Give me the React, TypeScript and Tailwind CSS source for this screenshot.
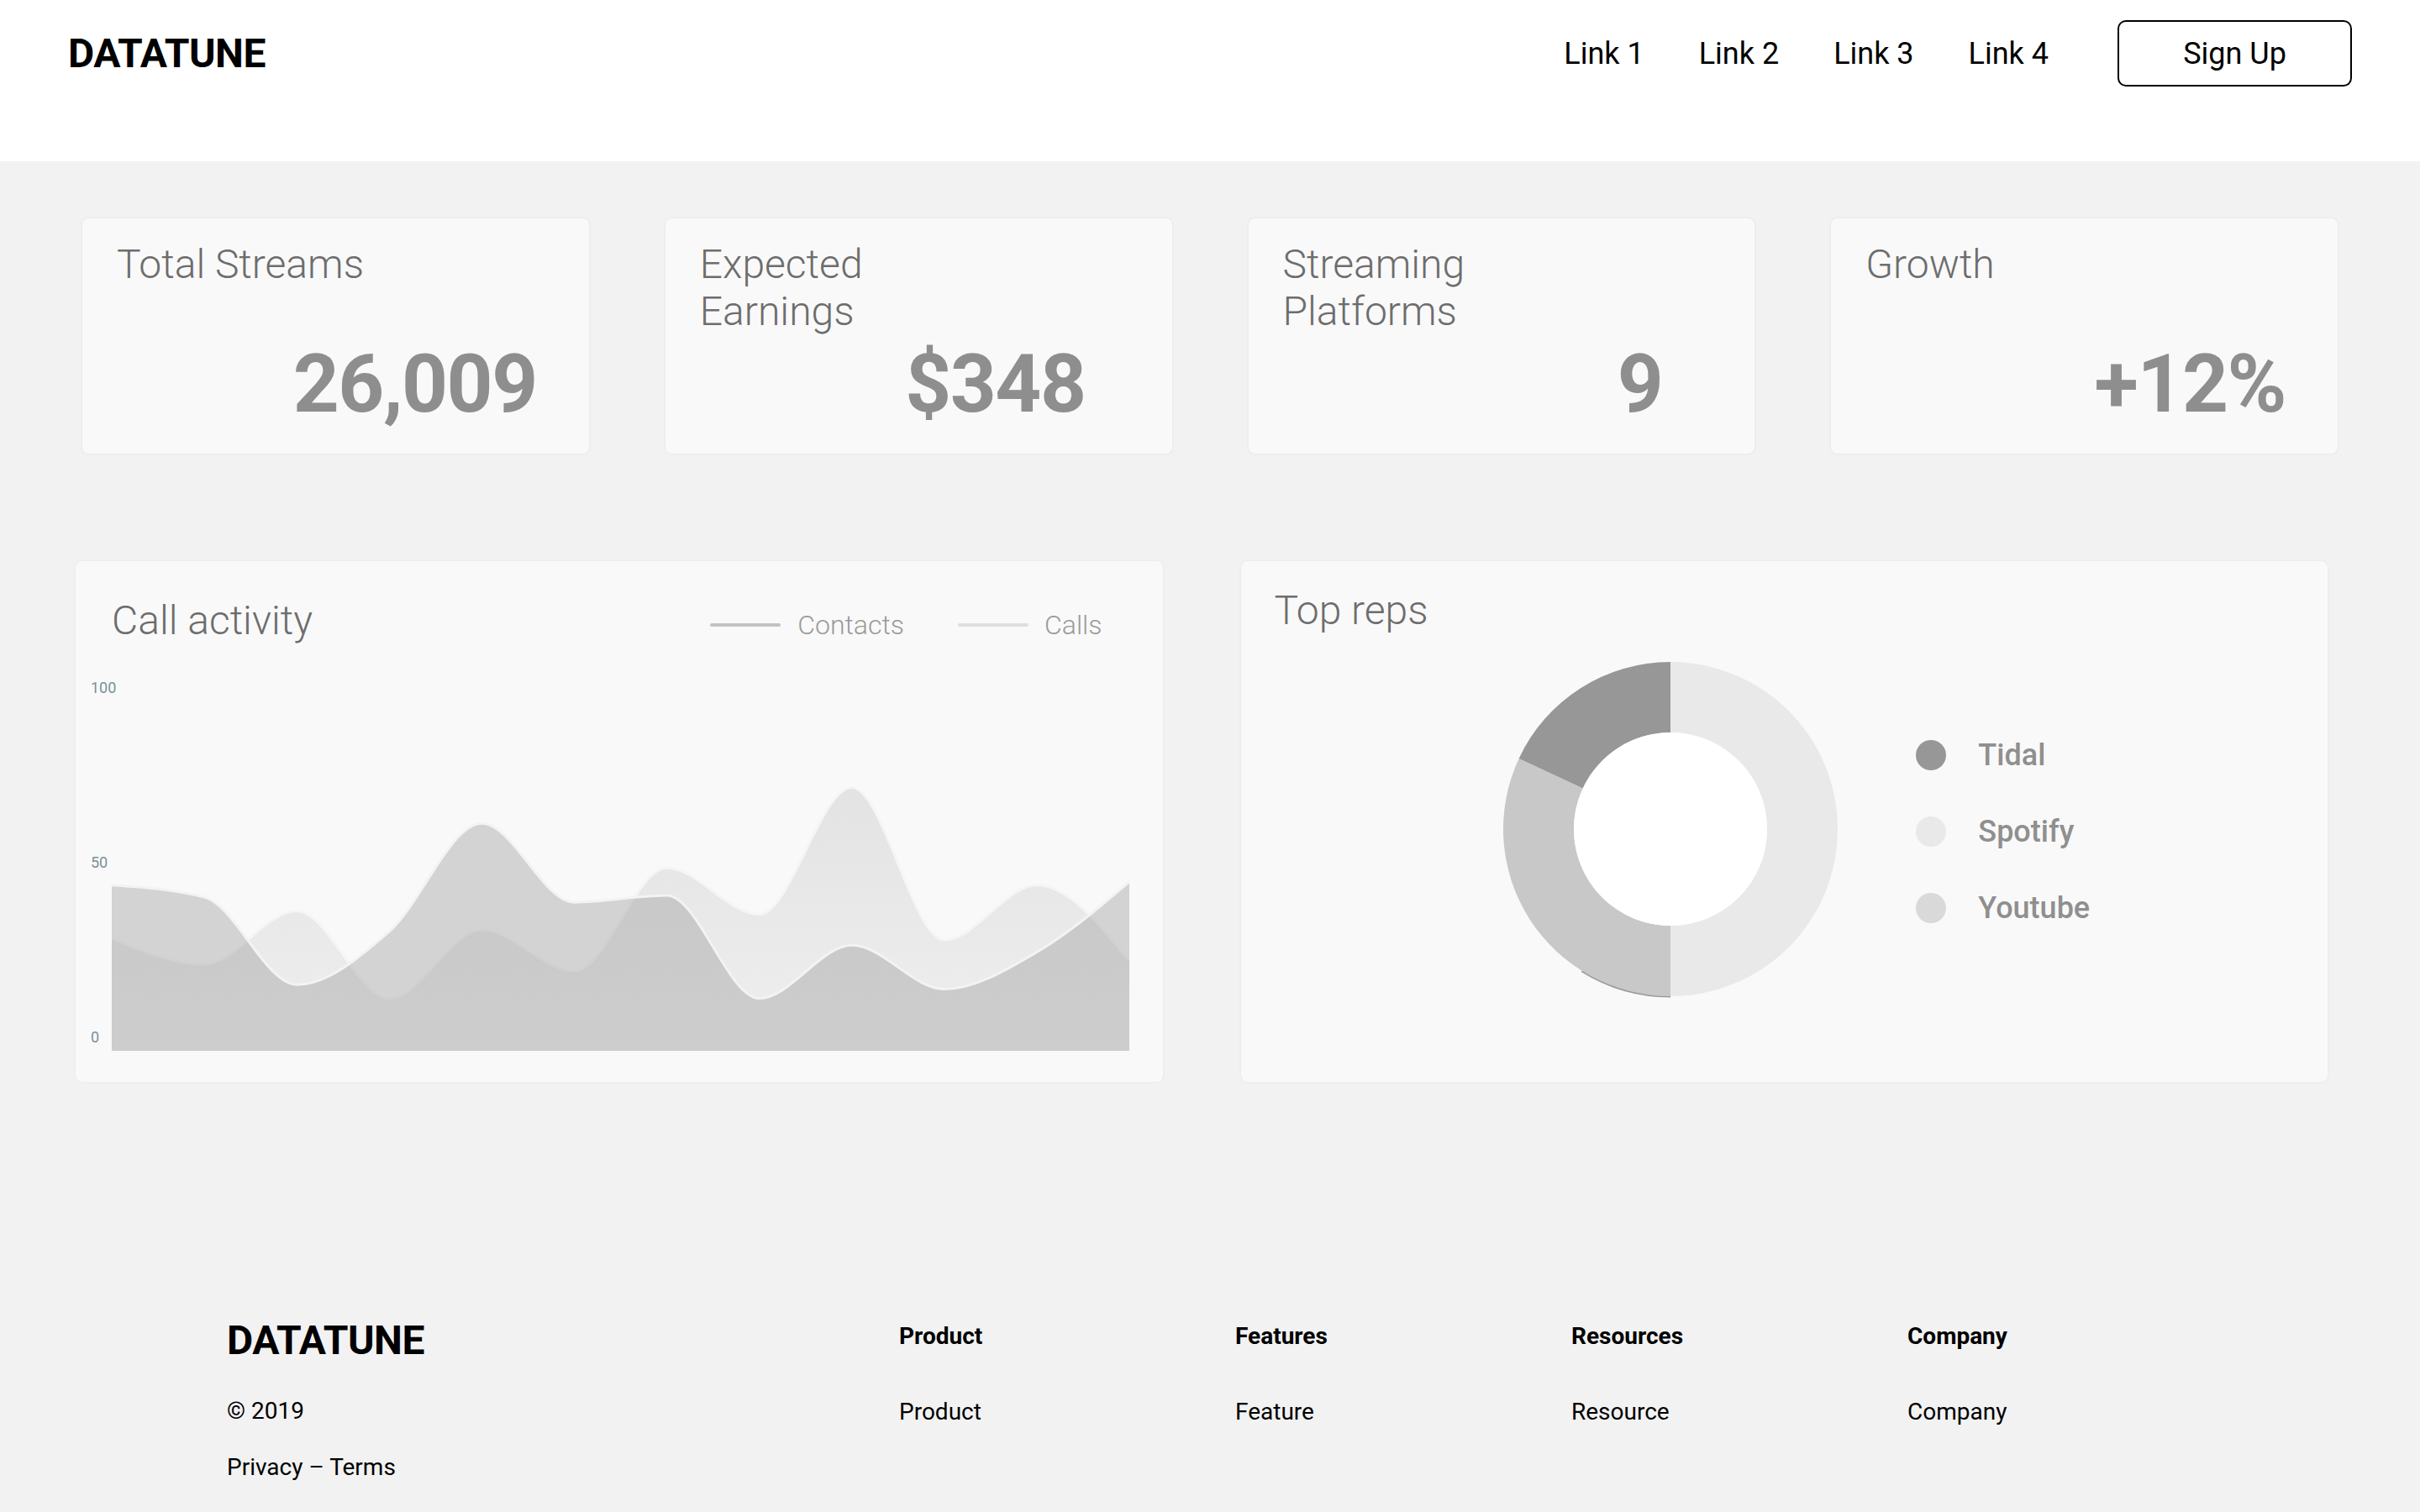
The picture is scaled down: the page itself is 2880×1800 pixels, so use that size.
import React from 'react';

const stats = [
  { label: 'Total Streams', value: '26,009', pr: 'pr-[62px]' },
  { label: 'Expected Earnings', value: '$348', pr: 'pr-[103px]' },
  { label: 'Streaming Platforms', value: '9', pr: 'pr-[110px]' },
  { label: 'Growth', value: '+12%', pr: 'pr-[62px]' },
];

const footerCols = [
  { title: 'Product', link: 'Product' },
  { title: 'Features', link: 'Feature' },
  { title: 'Resources', link: 'Resource' },
  { title: 'Company', link: 'Company' },
];

// chart data, in the chart's own coordinate space (y grows downwards)
const contacts = [965, 1000, 1255, 1100, 785, 1015, 995, 1295, 1140, 1268, 1160, 955];
const calls = [1120, 1195, 1040, 1295, 1095, 1215, 915, 1050, 680, 1125, 965, 1185];

const X0 = 62;
const X1 = 1490;
const BOTTOM = 1448;

// monotone cubic curve, same idea as d3's curveMonotoneX
function curve(ys: number[]) {
  const h = (X1 - X0) / (ys.length - 1);
  const xs = ys.map((_, i) => X0 + i * h);
  const s = ys.slice(1).map((y, i) => (y - ys[i]) / h);
  const t = ys.map((_, i) => {
    if (i === 0 || i === ys.length - 1) return 0;
    const a = s[i - 1];
    const b = s[i];
    const p = (a + b) / 2;
    return (Math.sign(a) + Math.sign(b)) * Math.min(Math.abs(a), Math.abs(b), 0.5 * Math.abs(p));
  });
  t[0] = (3 * s[0] - t[1]) / 2;
  const n = ys.length - 1;
  t[n] = (3 * s[n - 1] - t[n - 1]) / 2;

  let d = `M ${xs[0]} ${ys[0]}`;
  for (let i = 0; i < n; i++) {
    d += ` C ${xs[i] + h / 3} ${ys[i] + (t[i] * h) / 3}, ${xs[i + 1] - h / 3} ${ys[i + 1] - (t[i + 1] * h) / 3}, ${xs[i + 1]} ${ys[i + 1]}`;
  }
  return d;
}

function area(ys: number[]) {
  return `${curve(ys)} L ${X1} ${BOTTOM} L ${X0} ${BOTTOM} Z`;
}

function CallChart() {
  return (
    <svg
      width={1211}
      height={432}
      viewBox="62 390 1428 1058"
      preserveAspectRatio="none"
      className="mt-[9px] block"
    >
      <defs>
        <linearGradient id="callsFill" x1="0" y1="0" x2="0" y2="1">
          <stop offset="0%" stopColor="#e3e3e3" />
          <stop offset="100%" stopColor="#efefef" />
        </linearGradient>
      </defs>
      <path d={area(calls)} fill="url(#callsFill)" />
      <path d={curve(calls)} fill="none" stroke="#f5f5f5" strokeWidth={3} vectorEffect="non-scaling-stroke" />
      <path d={area(contacts)} fill="rgba(150,150,150,0.38)" />
      <path d={curve(contacts)} fill="none" stroke="#f3f3f3" strokeWidth={3} vectorEffect="non-scaling-stroke" />
    </svg>
  );
}

function pt(c: number, r: number, deg: number) {
  const a = (deg * Math.PI) / 180;
  return [c + r * Math.sin(a), c - r * Math.cos(a)];
}

function slice(a0: number, a1: number, r0: number, r1: number, c: number) {
  const [ox0, oy0] = pt(c, r1, a0);
  const [ox1, oy1] = pt(c, r1, a1);
  const [ix1, iy1] = pt(c, r0, a1);
  const [ix0, iy0] = pt(c, r0, a0);
  const large = a1 - a0 > 180 ? 1 : 0;
  return `M ${ox0} ${oy0} A ${r1} ${r1} 0 ${large} 1 ${ox1} ${oy1} L ${ix1} ${iy1} A ${r0} ${r0} 0 ${large} 0 ${ix0} ${iy0} Z`;
}

function Donut() {
  const c = 202;
  return (
    <svg width={404} height={404} viewBox="0 0 404 404" className="block">
      <path
        d={(() => {
          const [x0, y0] = pt(c, 199, 180);
          const [x1, y1] = pt(c, 199, 212);
          return `M ${x0} ${y0} A 199 199 0 0 1 ${x1} ${y1}`;
        })()}
        fill="none"
        stroke="#9a9a9a"
        strokeWidth={3}
      />
      <path d={slice(0, 180, 115, 199, c)} fill="#e9e9e9" />
      <path d={slice(180, 295, 115, 199, c)} fill="#c8c8c8" />
      <path d={slice(295, 360, 115, 199, c)} fill="#979797" />
      <circle cx={c} cy={c} r={115} fill="#ffffff" />
    </svg>
  );
}

export default function App() {
  return (
    <div className="min-h-screen bg-[#f2f2f2] font-['Roboto',sans-serif] text-black">
      <header className="h-[192px] bg-white px-[81px] pt-[24px]">
        <div className="flex h-[79px] items-center justify-between">
          <div className="text-[48px] font-bold leading-none tracking-[-0.5px]">DATATUNE</div>
          <nav className="flex items-center">
            <div className="mr-[82px] flex items-center gap-[65px] text-[36px] leading-none">
              <a>Link 1</a>
              <a>Link 2</a>
              <a>Link 3</a>
              <a>Link 4</a>
            </div>
            <button className="h-[79px] w-[279px] rounded-[10px] border-2 border-black text-[36px] leading-none">
              Sign Up
            </button>
          </nav>
        </div>
      </header>

      <main>
        <section className="grid grid-cols-4 gap-[91px] px-[98px] pt-[68px]">
          {stats.map((s) => (
            <div
              key={s.label}
              className="flex h-[280px] flex-col rounded-[8px] bg-[#f9f9f9] pl-[41px] pt-[27px] shadow-[0_0_4px_rgba(0,0,0,0.06)]"
            >
              <div className="h-[112px] max-w-[330px] text-[48px] font-light leading-[56px] text-[#6d6d6d]">
                {s.label}
              </div>
              <div
                className={`mt-[10px] text-right text-[96px] font-bold leading-none tracking-[-1.5px] text-[#8e8e8e] ${s.pr}`}
              >
                {s.value}
              </div>
            </div>
          ))}
        </section>

        <section className="mt-[128px] grid grid-cols-2 gap-[93px] pl-[90px] pr-[110px]">
          <div className="h-[620px] rounded-[8px] bg-[#f9f9f9] shadow-[0_0_4px_rgba(0,0,0,0.05)]">
            <div className="flex items-center justify-between pl-[43px] pr-[72px] pt-[43px]">
              <h2 className="text-[48px] font-light leading-[56px] text-[#6d6d6d]">Call activity</h2>
              <div className="flex items-center pt-[10px] text-[32px] font-light leading-none text-[#9a9a9a]">
                <span className="h-[4px] w-[84px] rounded-full bg-[#c2c2c2]" />
                <span className="ml-[20px]">Contacts</span>
                <span className="ml-[64px] h-[4px] w-[84px] rounded-full bg-[#dedede]" />
                <span className="ml-[19px]">Calls</span>
              </div>
            </div>
            <div className="mt-[43px] flex items-start pl-[18px]">
              <div className="flex h-[434px] w-[25px] flex-col justify-between text-[18px] leading-[18px] text-[#78909c]">
                <span>100</span>
                <span>50</span>
                <span>0</span>
              </div>
              <CallChart />
            </div>
          </div>

          <div className="h-[620px] rounded-[8px] bg-[#f9f9f9] shadow-[0_0_4px_rgba(0,0,0,0.05)]">
            <h2 className="pl-[40px] pt-[31px] text-[48px] font-light leading-[56px] text-[#6d6d6d]">Top reps</h2>
            <div className="mt-[30px] flex items-center justify-center pl-[27px]">
              <Donut />
              <ul className="ml-[90px] mt-[6px] flex flex-col gap-[55px] text-[36px] font-medium leading-none text-[#8f8f8f]">
                <li className="flex h-[36px] items-center">
                  <span className="h-[36px] w-[36px] rounded-full bg-[#979797]" />
                  <span className="ml-[38px]">Tidal</span>
                </li>
                <li className="flex h-[36px] items-center">
                  <span className="h-[36px] w-[36px] rounded-full bg-[#e9e9e9]" />
                  <span className="ml-[38px]">Spotify</span>
                </li>
                <li className="flex h-[36px] items-center">
                  <span className="h-[36px] w-[36px] rounded-full bg-[#d9d9d9]" />
                  <span className="ml-[38px]">Youtube</span>
                </li>
              </ul>
            </div>
          </div>
        </section>
      </main>

      <footer className="flex pb-[40px] pl-[270px] pt-[284px]">
        <div className="flex w-[800px] flex-col">
          <div className="text-[48px] font-bold leading-none tracking-[-0.5px]">DATATUNE</div>
          <div className="mt-[46px] text-[28px] leading-none">© 2019</div>
          <div className="mt-[39px] text-[28px] leading-none">Privacy – Terms</div>
        </div>
        {footerCols.map((c) => (
          <div key={c.title} className="w-[400px] pt-[5px]">
            <div className="text-[28px] font-bold leading-none">{c.title}</div>
            <div className="mt-[62px] text-[28px] leading-none">{c.link}</div>
          </div>
        ))}
      </footer>
    </div>
  );
}
